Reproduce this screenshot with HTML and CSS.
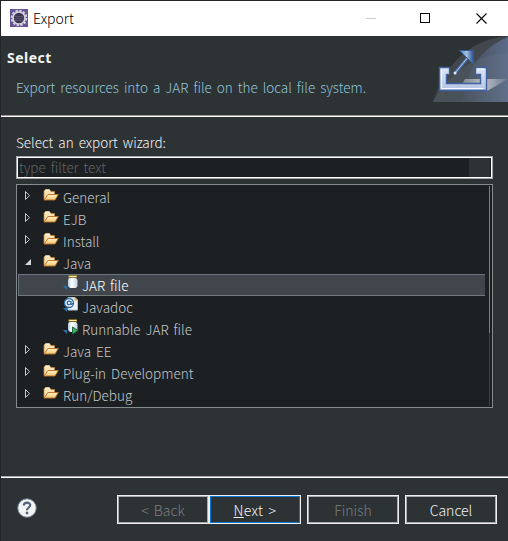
FILE: index.html
```html
<!DOCTYPE html>
<html lang="en">
<head>
<meta charset="utf-8">
<title>Export</title>
<link rel="stylesheet" href="styles.css">
</head>
<body>
<svg width="0" height="0" class="defs" aria-hidden="true">
  <defs>
    <linearGradient id="fold" x1="0" y1="0" x2="0" y2="1"><stop offset="0" stop-color="#fff3c4"/><stop offset="1" stop-color="#f5c473"/></linearGradient>
    <linearGradient id="glass" x1="0" x2="1"><stop offset="0" stop-color="#b9cbe2"/><stop offset=".4" stop-color="#fff"/><stop offset="1" stop-color="#c5d3e6"/></linearGradient>
    <symbol id="folder" viewBox="0 0 16 14">
      <path d="M1 11.500V3l1.500-1.500h4L8 3.500h3.500v3H5L2 12z" fill="#f9e3b8" stroke="#c58334" stroke-width=".8"/>
      <path d="M2.500 2h4" stroke="#fff"/>
      <path d="M1 12 5 6.500h10.300L12 12z" fill="url(#fold)" stroke="#ba732a" stroke-width=".9"/>
    </symbol>
    <symbol id="closed" viewBox="0 0 6 10"><path d="M.5.500v8l4-4z" fill="none" stroke="#c4c8ca"/></symbol>
    <symbol id="open" viewBox="0 0 6 10"><path d="M6 2v6H0z" fill="#d5d8da"/></symbol>
    <symbol id="jar" viewBox="0 0 16 16">
      <path d="M0 11h4v4z" fill="#2872ad"/>
      <path d="M6 3h7l1.500 2v6L13 13H7l-2-2V5z" fill="url(#glass)"/>
      <path d="M5.500 1.500h8.500" stroke="#d7a72d" stroke-width="2"/><path d="M6.500 1.500h6.500" stroke="#fff0a5"/>
    </symbol>
    <symbol id="doc" viewBox="0 0 16 16">
      <path d="M0 11h4v4z" fill="#2872ad"/>
      <path d="M5 .5h7L14.500 3v10H5z" fill="#edf1f7" stroke="#b8c4d4"/><path d="M11.500 0v3.500H15z" fill="#d4ac54"/>
      <circle cx="6" cy="6" r="4.500" fill="#e9f2fb" stroke="#2e6ca4" stroke-width="1.300"/>
      <path d="M8 4v3q1 1 2-1M7.800 6a1.800 1.800 0 1 1-.5-1.400" fill="none" stroke="#255f98" stroke-width="1.200"/>
    </symbol>
  </defs>
</svg>
<div class="window">
  <header class="titlebar">
    <svg class="app" viewBox="0 0 18 18"><rect width="18" height="18" fill="#665497"/><circle cx="9" cy="9" r="7.300" fill="none" stroke="#d6d3dd" stroke-width="2" stroke-dasharray="2.400 1.420"/><circle cx="9" cy="9" r="6" fill="#3d354f" stroke="#d6d3dd" stroke-width="1.600"/><path d="M4.500 7.500h9M4 9.500h10M5 11.500h8" stroke="#625b7b" stroke-width=".8"/></svg>
    <span class="caption">Export</span>
    <svg class="controls" viewBox="0 0 128 20" shape-rendering="crispEdges"><path d="M0 10.500h10" stroke="#ccc"/><path d="M54.500 5.500h9v9h-9z" fill="none" stroke="#000"/><path d="m110.500 5.500 10 10m0-10-10 10" stroke="#000" stroke-width="1.100" shape-rendering="auto"/></svg>
  </header>
  <section class="banner">
    <div class="heading"><h1>Select</h1><p>Export resources into a JAR file on the local file system.</p></div>
    <svg class="art" viewBox="0 0 75 66">
      <defs>
        <linearGradient id="steel" x1="0" x2="1"><stop offset="0" stop-color="#434b55"/><stop offset="1" stop-color="#5c6b87"/></linearGradient>
        <linearGradient id="tray" x1="0" y1="0" x2="0" y2="1"><stop offset="0" stop-color="#dfe6f5"/><stop offset="1" stop-color="#b3c3e4"/></linearGradient>
        <linearGradient id="shine" x1="0" x2="1"><stop offset="0" stop-color="#747b85"/><stop offset=".5" stop-color="#b9bdc5"/><stop offset="1" stop-color="#6e7a90"/></linearGradient>
        <linearGradient id="arrow"><stop offset="0" stop-color="#4f78b6"/><stop offset=".5" stop-color="#a5c1e5"/><stop offset="1" stop-color="#244d91"/></linearGradient>
      </defs>
      <path d="M0 66C12 29 36 3 75 0v66z" fill="#41474d"/>
      <path d="M30 66C31 36 48 12 75 1v65z" fill="url(#steel)"/>
      <path d="M0 66C15 39 38 19 75 17v49z" fill="#8290a6" opacity=".14"/>
      <path d="M32 43h43L54 55H25z" fill="url(#shine)"/>
      <path d="M6.500 31.500h10v7h-3v9h34v-9h-5v-7h11v23h-47z" fill="url(#tray)" stroke="#3f619e" stroke-width="1.400"/>
      <path d="M8.500 33v19.500h42M44 33h7" fill="none" stroke="#f6f9ff"/>
      <path d="M22 37 37 19" stroke="#4b70ac" stroke-width="3"/><path d="M22 37 36 20" stroke="#b5cae8"/>
      <circle cx="22" cy="37" r="1.500" fill="#dbe6f5"/>
      <path d="M26.500 14.500h14v14z" fill="url(#arrow)" stroke="#365b99"/>
    </svg>
  </section>
  <main class="content">
    <label for="filter">Select an export wizard:</label>
    <div class="filter" id="filter"><span>type filter text</span><i></i></div>
    <div class="tree">
      <ul>
        <li><svg class="twist"><use href="#closed"/></svg><svg class="folder"><use href="#folder"/></svg><span>General</span></li>
        <li><svg class="twist"><use href="#closed"/></svg><svg class="folder"><use href="#folder"/></svg><span>EJB</span></li>
        <li><svg class="twist"><use href="#closed"/></svg><svg class="folder"><use href="#folder"/></svg><span>Install</span></li>
        <li><svg class="twist"><use href="#open"/></svg><svg class="folder"><use href="#folder"/></svg><span>Java</span></li>
        <li class="leaf selected"><svg class="file"><use href="#jar"/></svg><span>JAR file</span></li>
        <li class="leaf"><svg class="file"><use href="#doc"/></svg><span>Javadoc</span></li>
        <li class="leaf"><svg class="file" viewBox="0 0 16 16"><use href="#jar" width="16" height="16"/><path d="M9.500 8v7l5.500-3.500z" fill="#4caf68" stroke="#176d38"/></svg><span>Runnable JAR file</span></li>
        <li><svg class="twist"><use href="#closed"/></svg><svg class="folder"><use href="#folder"/></svg><span>Java EE</span></li>
        <li><svg class="twist"><use href="#closed"/></svg><svg class="folder"><use href="#folder"/></svg><span>Plug-in Development</span></li>
        <li><svg class="twist"><use href="#closed"/></svg><svg class="folder"><use href="#folder"/></svg><span>Run/Debug</span></li>
      </ul>
      <div class="scroll"><i></i></div>
    </div>
  </main>
  <footer class="footer">
    <svg class="help" viewBox="0 0 20 20"><circle cx="10" cy="10" r="9.300" fill="#f2f3f3" stroke="#66768b"/><path d="M6.800 7.500C7 3.700 13.300 3.800 13.200 7.200c0 2.200-3.200 2.500-3.200 5" fill="none" stroke="#53647f" stroke-width="2.200"/><circle cx="10" cy="15" r="1.400" fill="#53647f"/></svg>
    <button class="disabled">&lt; Back</button><button class="default"><u>N</u>ext &gt;</button><button class="disabled gap">Finish</button><button class="gap">Cancel</button>
  </footer>
</div>
</body>
</html>
```
FILE: styles.css
```css
* { box-sizing: border-box; }
body { margin: 0; overflow: hidden; background: #2d3235; color: #f3f4f4; font: 300 13.5px/20px "Noto Sans CJK KR", "Noto Sans", sans-serif; word-spacing: 2px; }
svg { display: block; flex: none; }
.defs { position: absolute; }
.window { width: 508px; height: 541px; display: flex; flex-direction: column; border-top: 1px solid #242629; border-left: 1px solid #242629; }
.titlebar { height: 35px; display: flex; align-items: center; padding: 0 26px 1px 9px; background: #fff; color: #000; }
.app { width: 18px; height: 18px; }
.caption { margin-left: 5px; font-size: 14px; }
.controls { width: 128px; height: 20px; margin-left: auto; margin-right: -12px; }
.banner { height: 79px; display: flex; justify-content: space-between; }
.heading { padding: 12px 0 0 6px; }
h1 { margin: 0; font: 700 14px/20px "Noto Sans", sans-serif; letter-spacing: .5px; }
p { margin: 9px 0 0 9px; color: #91c5d8; white-space: nowrap; }
.art { width: 75px; height: 66px; }
.content { height: 361px; padding: 16px 14px 0 15px; border-top: 1px solid #999; box-shadow: inset 0 1px #fff; }
label { display: block; height: 24px; }
.filter { width: 477px; height: 23px; display: flex; justify-content: space-between; border: 1px solid #a5a8aa; box-shadow: inset 0 0 0 1px #fff; background: #1d2022; padding: 1px 2px; color: #606467; line-height: 19px; }
.filter i { width: 21px; height: 19px; background: #2d3235; }
.tree { width: 477px; height: 224px; margin-top: 5px; border: 1px solid #868b90; background: #1d2022; padding: 1px 2px 1px 1px; display: flex; justify-content: space-between; color: #c3c7ca; }
ul { width: 467px; margin: 0; padding: 0; list-style: none; }
li { height: 22px; display: flex; align-items: center; padding-left: 7px; white-space: nowrap; }
.twist { width: 6px; height: 10px; margin-top: -3px; }
.folder { width: 16px; height: 14px; margin: -4px 4px 0 12px; }
.leaf { padding-left: 45px; }
.file { width: 16px; height: 16px; margin: -4px 3px 0 0; }
.selected { background: #40464c; box-shadow: inset 0 1px #68757e, inset 0 -1px #72777a, inset 1px 0 #68757e; color: #fff; }
.scroll { width: 1px; background: #3c4144; }
.scroll i { display: block; height: 147px; background: #758087; }
.footer { flex: 1; display: flex; align-items: flex-start; padding: 18px 0 0 16px; border-top: 1px solid #aaa; box-shadow: inset 0 1px #fff; }
.help { width: 20px; height: 20px; margin: 3px 80px 0 0; }
button { width: 92px; height: 29px; padding: 0; border: 1px solid #eee; box-shadow: inset 0 0 0 1px #a9aaab; background: #2d3235; color: #f3f4f4; font: inherit; font-size: 14px; word-spacing: 2px; }
.default { box-shadow: inset 0 0 0 1px #0878d4; letter-spacing: .3px; }
.disabled { color: #7b7e81; }
.gap { margin-left: 6px; }
```
